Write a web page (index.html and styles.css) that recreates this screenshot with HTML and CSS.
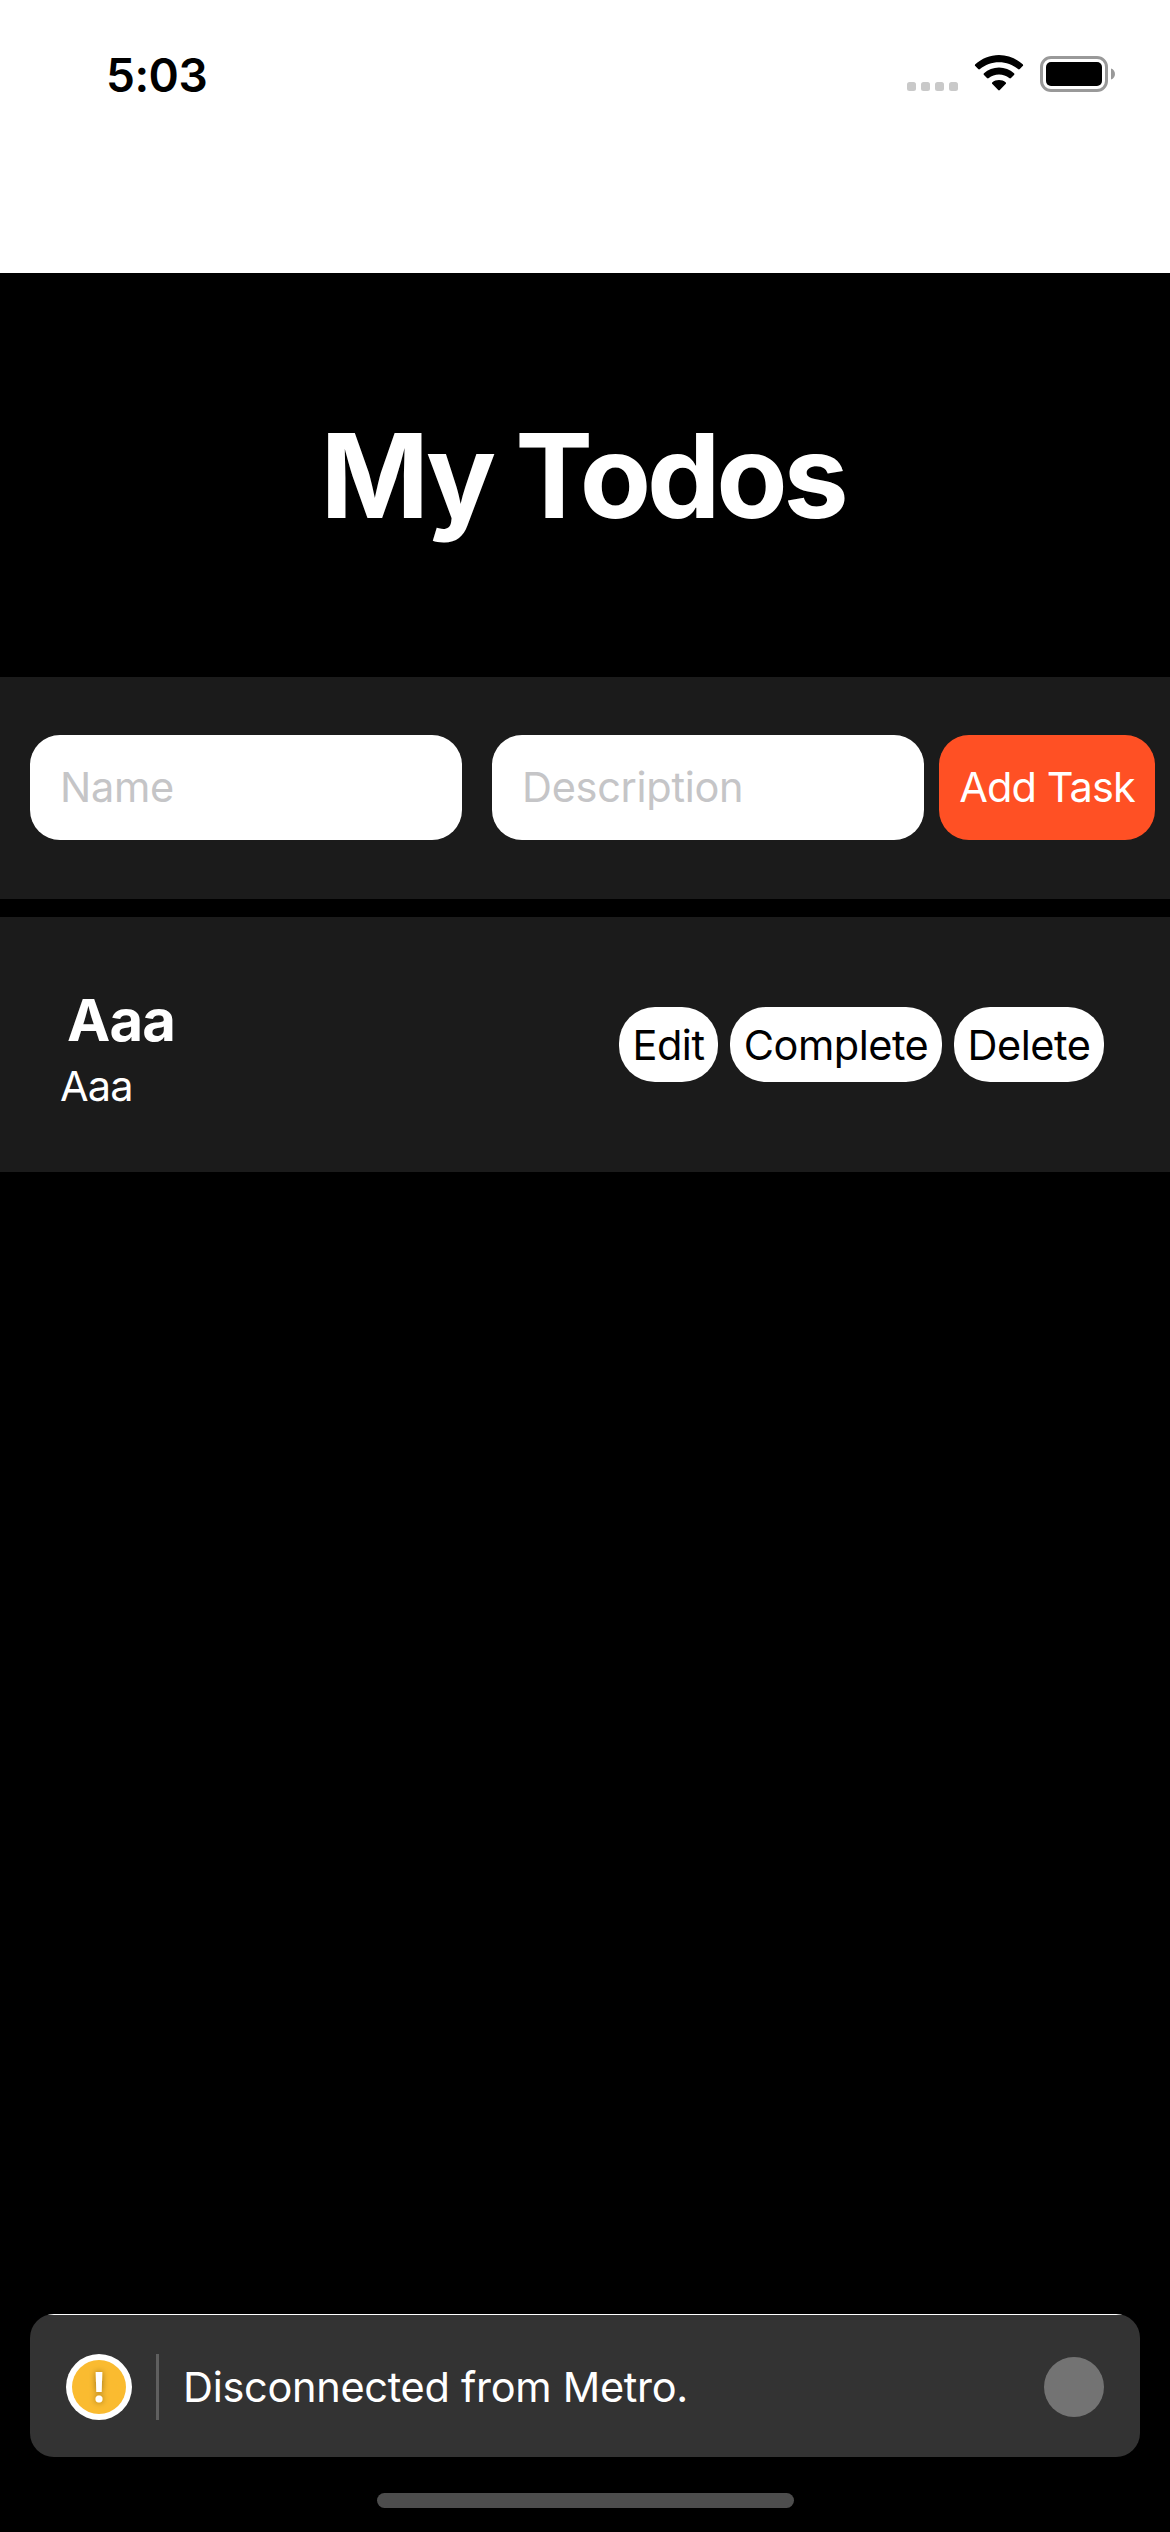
FILE: index.html
```html
<!DOCTYPE html>
<html lang="en">
<head>
<meta charset="utf-8">
<title>My Todos</title>
<link rel="stylesheet" href="styles.css">
</head>
<body>
<div class="screen">
  <header class="status-bar">
    <span class="time">5:03</span>
    <div class="status-icons">
      <svg class="signal" width="51" height="9" viewBox="0 0 51 9" fill="#c9c9c9"><rect width="9" height="9" rx="2.5"/><rect x="14" width="9" height="9" rx="2.5"/><rect x="28" width="9" height="9" rx="2.5"/><rect x="42" width="9" height="9" rx="2.5"/></svg>
      <svg class="wifi" width="50" height="37" viewBox="0 0 50 37"><path d="M25 0C34 0 42.300 3.500 48.700 9.300Q49.600 10.200 48.700 11.100L45.800 14.100Q44.900 14.900 44 14.100C38.800 9.700 32.200 7.300 25 7.300S11.200 9.700 6 14.100Q5.100 14.900 4.200 14.100L1.300 11.100Q.4 10.200 1.300 9.300C7.700 3.500 16 0 25 0ZM25 12.500C30.700 12.500 35.900 14.600 40 18.200Q40.900 19.100 40 20L37 23Q36.100 23.800 35.200 23C32.400 20.800 28.900 19.400 25 19.400S17.600 20.800 14.800 23Q13.900 23.800 13 23L10 20Q9.100 19.100 10 18.200C14.100 14.600 19.300 12.500 25 12.500ZM25 25C27.600 25 29.800 25.900 31.600 27.300Q32.500 28.200 31.600 29.100L25.800 35Q25 35.800 24.200 35L18.400 29.100Q17.500 28.200 18.400 27.300C20.200 25.900 22.400 25 25 25Z"/></svg>
      <svg class="battery" width="75" height="36" viewBox="0 0 75 36"><rect x="1.500" y="1.500" width="65" height="33" rx="9.500" fill="none" stroke="#999" stroke-width="3"/><rect x="6" y="6" width="56" height="24" rx="5"/><path d="M71 12.500C76.300 14 76.300 22 71 23.500Z" fill="#999"/></svg>
    </div>
  </header>
  <main class="app">
    <h1 class="title">My Todos</h1>
    <form class="task-form">
      <input class="field" type="text" placeholder="Name">
      <input class="field" type="text" placeholder="Description">
      <button class="add" type="button">Add Task</button>
    </form>
    <section class="task">
      <div class="task-text">
        <h2 class="task-name">Aaa</h2>
        <p class="task-description">Aaa</p>
      </div>
      <div class="task-actions">
        <button class="pill edit" type="button">Edit</button>
        <button class="pill complete" type="button">Complete</button>
        <button class="pill delete" type="button">Delete</button>
      </div>
    </section>
  </main>
  <footer class="bottom">
    <div class="toast">
      <svg class="warning" width="66" height="66" viewBox="0 0 66 66"><defs><filter id="glow" x="-200%" y="-50%" width="500%" height="200%"><feDropShadow dx="0" dy="0" stdDeviation="3" flood-color="#000" flood-opacity=".4"/></filter></defs><circle cx="33" cy="33" r="33" fill="#fff"/><circle cx="33" cy="33" r="27" fill="#fabb30"/><g fill="#fff" filter="url(#glow)"><path d="M29.700 18H36.300L35.700 38H30.300Z"/><circle cx="33" cy="45" r="3.500"/></g></svg>
      <span class="divider"></span>
      <span class="message">Disconnected from Metro.</span>
      <span class="dismiss"></span>
    </div>
    <div class="home-indicator"></div>
  </footer>
</div>
</body>
</html>
```
FILE: styles.css
```css
* { box-sizing: border-box; }
body { margin: 0; background: #000; }
.screen {
  width: 1170px;
  height: 2532px;
  display: flex;
  flex-direction: column;
  font: 400 41.5px/50px Inter, "Liberation Sans", sans-serif;
  color: #fff;
  overflow: hidden;
}
.status-bar {
  height: 273px;
  flex: none;
  display: flex;
  justify-content: space-between;
  align-items: flex-start;
  padding: 50px 55px 0 106px;
  background: #fff;
  color: #000;
}
.time { font-size: 46px; font-weight: 600; line-height: 50px; letter-spacing: -0.5px; }
.status-icons { display: flex; align-items: flex-end; padding-top: 5px; }
.signal { margin-bottom: 1px; }
.wifi { margin-left: 16px; }
.battery { margin-left: 16px; }
.app { flex: 1; }
.title {
  height: 404px;
  margin: 0;
  padding-right: 5px;
  font-size: 116.5px;
  font-weight: 700;
  line-height: 406px;
  letter-spacing: -4.2px;
  text-align: center;
}
.task-form {
  height: 222px;
  display: flex;
  align-items: center;
  padding: 0 15px 1px 30px;
  margin-bottom: 18px;
  background: #1b1b1b;
}
.field {
  width: 432px;
  height: 105px;
  margin: 0 30px 0 0;
  padding: 0 30px 1px;
  border: 0;
  border-radius: 30px;
  background: #fff;
  font: inherit;
  letter-spacing: -0.3px;
}
.field + .field { margin-right: 15px; }
.field::placeholder { color: #c5c5c7; opacity: 1; }
.add {
  width: 216px;
  height: 105px;
  padding: 0 0 2px;
  border: 0;
  border-radius: 30px;
  background: #ff5024;
  color: #fff;
  font: inherit;
  letter-spacing: -0.9px;
  white-space: nowrap;
}
.task {
  height: 255px;
  display: flex;
  justify-content: space-between;
  align-items: center;
  padding: 0 66px 0 60px;
  background: #1b1b1b;
}
.task-text { padding-top: 6px; }
.task-name {
  margin: 0 0 5px;
  padding-left: 7px;
  font-size: 58px;
  font-weight: 700;
  line-height: 72px;
  letter-spacing: -0.8px;
}
.task-description { margin: 0; letter-spacing: -0.8px; }
.task-actions { display: flex; gap: 12px; }
.pill {
  height: 75px;
  padding: 0;
  border: 0;
  border-radius: 36px;
  background: #fff;
  color: #000;
  font: inherit;
  letter-spacing: -0.5px;
}
.edit { width: 99px; }
.complete { width: 212px; }
.delete { width: 150px; }
.bottom { height: 218px; padding: 0 30px; }
.toast {
  height: 143px;
  display: flex;
  align-items: center;
  padding: 3px 36px 0;
  border-radius: 24px;
  background: linear-gradient(#fff 1px, #333 1px);
}
.divider { width: 3px; height: 66px; margin: 0 24px; background: #5f5f5f; }
.message { flex: 1; letter-spacing: -0.3px; }
.dismiss { width: 60px; height: 60px; border-radius: 50%; background: #737373; }
.home-indicator { width: 417px; height: 15px; margin: 36px auto 0; border-radius: 8px; background: #4d4d4d; }
```
